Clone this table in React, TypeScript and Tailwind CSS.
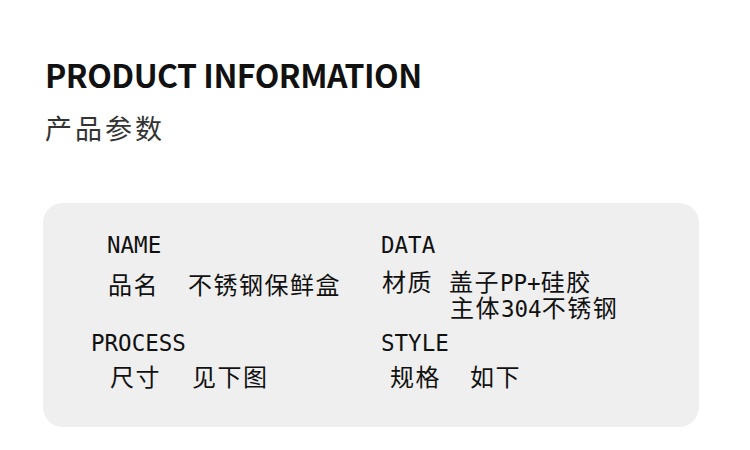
import React from "react";

const mono = "font-['DejaVu_Sans_Mono',monospace] text-[22.5px] leading-none";
const cjk = "font-['Noto_Sans_CJK_SC',sans-serif] text-[24px] leading-[26px] tracking-[1.5px]";
const inlineMono = "font-['DejaVu_Sans_Mono',monospace] text-[22.5px] leading-none tracking-normal";

export default function App() {
  return (
    <div className="w-[750px] h-[450px] bg-white overflow-hidden font-['Noto_Sans_CJK_SC',sans-serif]">
      {/* heading */}
      <div className="pl-[45px] pt-[58px]">
        <h1 className="text-[32px] font-bold leading-none tracking-[-0.5px] text-[#111]">PRODUCT INFORMATION</h1>
        <p className="mt-[24px] text-[27px] leading-none tracking-[3px] text-[#333]">产品参数</p>
      </div>

      {/* spec card */}
      <div className="ml-[43px] mt-[62px] w-[656px] h-[224px] rounded-[20px] bg-[#efefef] pt-[31px] pl-[48px] text-[#111]">
        <div className="grid grid-cols-[290px_1fr] grid-rows-[98px_auto]">
          {/* name */}
          <div>
            <div className={`${mono} ml-[16px]`}>NAME</div>
            <div className={`${cjk} mt-[14px] ml-[17px] flex gap-[29px]`}>
              <span>品名</span>
              <span>不锈钢保鲜盒</span>
            </div>
          </div>

          {/* data */}
          <div>
            <div className={mono}>DATA</div>
            <div className={`${cjk} mt-[11px] ml-[1px] flex gap-[16px]`}>
              <span>材质</span>
              <div className="flex flex-col">
                <div className="h-[26px]">
                  盖子<span className={inlineMono}>PP+</span>硅胶
                </div>
                <div className="h-[26px] ml-[1px]">
                  主体<span className={inlineMono}>304</span>不锈钢
                </div>
              </div>
            </div>
          </div>

          {/* process */}
          <div>
            <div className={mono}>PROCESS</div>
            <div className={`${cjk} mt-[8px] ml-[19px] flex gap-[31px]`}>
              <span>尺寸</span>
              <span>见下图</span>
            </div>
          </div>

          {/* style */}
          <div>
            <div className={mono}>STYLE</div>
            <div className={`${cjk} mt-[8px] ml-[9px] flex gap-[29px]`}>
              <span>规格</span>
              <span>如下</span>
            </div>
          </div>
        </div>
      </div>
    </div>
  );
}
